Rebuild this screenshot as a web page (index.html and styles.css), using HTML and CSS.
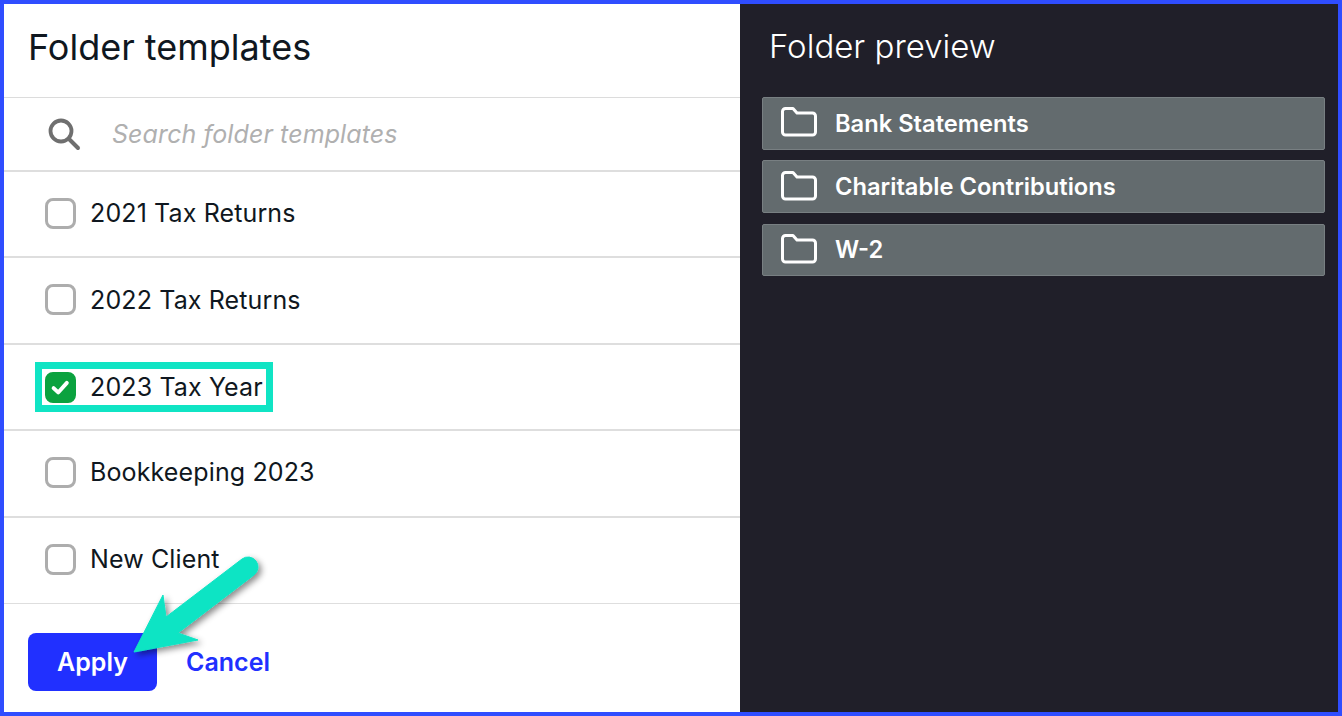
FILE: index.html
```html
<!DOCTYPE html>
<html lang="en">
<head>
    <meta charset="UTF-8">
    <meta name="viewport" content="width=device-width, initial-scale=1.0">
    <title>Folder templates</title>
    <link rel="stylesheet" href="styles.css">
</head>
<body>
    <div class="frame">
        <div class="templates">
            <h1 class="templates-title">Folder templates</h1>
            <div class="search">
                <svg class="search-icon" width="34" height="34" viewBox="0 0 34 34" fill="none" stroke="#6f6f6f" stroke-linecap="round">
                    <circle cx="14" cy="14" r="10.5" stroke-width="3.8"/>
                    <path d="M22.5 22.500l8.500 8.500" stroke-width="4"/>
                </svg>
                <span class="search-text">Search folder templates</span>
            </div>
            <ul class="template-list">
                <li class="template-row"><span class="check"></span><span>2021 Tax Returns</span></li>
                <li class="template-row"><span class="check"></span><span>2022 Tax Returns</span></li>
                <li class="template-row">
                    <div class="highlight">
                        <span class="check checked">
                            <svg width="23" height="23" viewBox="0 0 20 20" fill="none" stroke="#fff" stroke-width="3.4" stroke-linecap="round" stroke-linejoin="round"><path d="M4 10.500l4 3.800 7.500-8.300"/></svg>
                        </span>
                        <span>2023 Tax Year</span>
                    </div>
                </li>
                <li class="template-row"><span class="check"></span><span>Bookkeeping 2023</span></li>
                <li class="template-row"><span class="check"></span><span>New Client</span></li>
            </ul>
            <div class="actions">
                <button class="apply">Apply</button>
                <button class="cancel">Cancel</button>
            </div>
        </div>
        <div class="preview">
            <h2 class="preview-title">Folder preview</h2>
            <div class="folder-list">
                <div class="folder">
                    <svg class="folder-icon" width="36" height="30" viewBox="0 0 36 30" fill="none" stroke="#fff" stroke-width="3" stroke-linejoin="round"><path d="M1.500 4.500a3 3 0 0 1 3-3h7.500l4 4.500h15.500a3 3 0 0 1 3 3v16a3 3 0 0 1-3 3h-27a3 3 0 0 1-3-3z"/></svg>
                    <span>Bank Statements</span>
                </div>
                <div class="folder">
                    <svg class="folder-icon" width="36" height="30" viewBox="0 0 36 30" fill="none" stroke="#fff" stroke-width="3" stroke-linejoin="round"><path d="M1.500 4.500a3 3 0 0 1 3-3h7.500l4 4.500h15.500a3 3 0 0 1 3 3v16a3 3 0 0 1-3 3h-27a3 3 0 0 1-3-3z"/></svg>
                    <span>Charitable Contributions</span>
                </div>
                <div class="folder">
                    <svg class="folder-icon" width="36" height="30" viewBox="0 0 36 30" fill="none" stroke="#fff" stroke-width="3" stroke-linejoin="round"><path d="M1.500 4.500a3 3 0 0 1 3-3h7.500l4 4.500h15.500a3 3 0 0 1 3 3v16a3 3 0 0 1-3 3h-27a3 3 0 0 1-3-3z"/></svg>
                    <span>W-2</span>
                </div>
            </div>
        </div>
        <!-- callout arrow drawn over the dialog -->
        <svg class="arrow" width="160" height="130" viewBox="0 0 160 130">
            <defs>
                <filter id="arrowShadow" x="-20%" y="-20%" width="150%" height="150%">
                    <feDropShadow dx="3" dy="3" stdDeviation="3" flood-color="#000" flood-opacity="0.45"/>
                </filter>
            </defs>
            <path filter="url(#arrowShadow)" fill="#10e4c4" stroke="#10e4c4" stroke-width="1" stroke-linejoin="round" d="M14 122L43 65 46 87 122 29A10 10 0 0 1 134 45L58 103 78 110z"/>
        </svg>
    </div>
</body>
</html>
```

FILE: styles.css
```css
* {
    box-sizing: border-box;
}
html, body {
    margin: 0;
    height: 100%;
}
body {
    font-family: Inter, "Liberation Sans", sans-serif;
    color: #0f1720;
}
.frame {
    position: relative;
    display: flex;
    width: 1342px;
    height: 716px;
    border: 4px solid #2f4dff;
    overflow: hidden;
}
.templates {
    width: 736px;
    background: #fff;
    display: flex;
    flex-direction: column;
}
.templates-title {
    margin: 0;
    height: 94px;
    padding: 0 0 8px 24px;
    display: flex;
    align-items: center;
    font-size: 36px;
    font-weight: 400;
    border-bottom: 1px solid #dcdcdc;
}
.search {
    height: 74px;
    display: flex;
    align-items: center;
    padding-left: 43px;
    border-bottom: 2px solid #dedede;
}
.search-icon {
    flex: none;
}
.search-text {
    margin-left: 31px;
    font-size: 25px;
    font-style: italic;
    letter-spacing: 0.1px;
    color: #b0b0b0;
}
.template-list {
    list-style: none;
    margin: 0;
    padding: 0;
}
.template-row {
    height: 86.4px;
    display: flex;
    align-items: center;
    gap: 14px;
    padding: 0 0 2px 41px;
    font-size: 25px;
    letter-spacing: 0.13px;
    border-bottom: 2px solid #dedede;
}
.template-row:last-child {
    border-bottom-width: 1px;
}
.check {
    flex: none;
    width: 31px;
    height: 31px;
    border: 3px solid #adadad;
    border-radius: 8px;
    display: flex;
    align-items: center;
    justify-content: center;
}
.check.checked {
    background: #0ba23f;
    border-color: #0ba23f;
}
.highlight {
    display: flex;
    align-items: center;
    gap: 14px;
    margin: 2px 0 0 -10px;
    padding: 3px 3px 2px 3px;
    border: 7px solid #10e4c4;
}
.actions {
    flex: 1;
    display: flex;
    align-items: center;
    padding: 0 0 0 24px;
}
.apply {
    width: 129px;
    height: 58px;
    margin-top: 8px;
    border: 0;
    border-radius: 8px;
    background: #2130ff;
    color: #fff;
    font: 600 25px Inter, "Liberation Sans", sans-serif;
}
.cancel {
    margin: 8px 0 0 29px;
    padding: 0;
    border: 0;
    background: none;
    color: #2130ff;
    font: 600 25px Inter, "Liberation Sans", sans-serif;
}
.preview {
    flex: 1;
    background: #201f29;
    padding: 0 13px 0 22px;
    color: #fff;
}
.preview-title {
    margin: 0;
    height: 93px;
    padding: 0 0 10px 7px;
    display: flex;
    align-items: center;
    font-size: 33px;
    font-weight: 300;
}
.folder-list {
    display: flex;
    flex-direction: column;
    gap: 10.5px;
}
.folder {
    height: 52.75px;
    display: flex;
    align-items: center;
    gap: 18px;
    padding-left: 18px;
    background: #636b6e;
    border: 1px solid #787f82;
    border-radius: 2px;
    font-size: 23.7px;
    font-weight: 600;
}
.folder-icon {
    flex: none;
    margin-bottom: 2px;
}
.arrow {
    position: absolute;
    left: 116px;
    top: 526px;
}
```
